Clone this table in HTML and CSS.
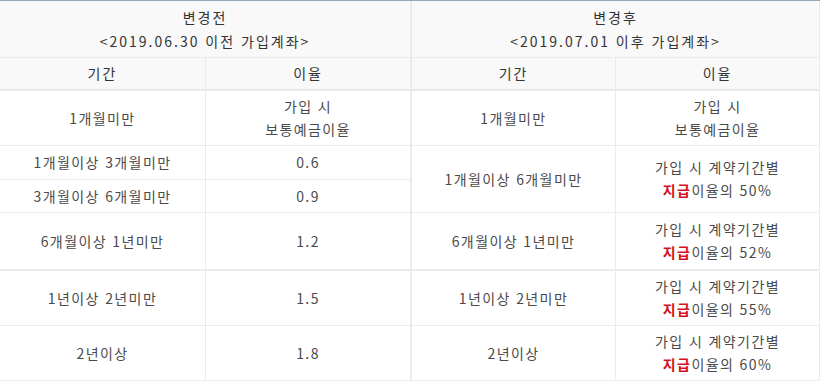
FILE: index.html
```html
<!DOCTYPE html>
<html lang="ko">
<head>
<meta charset="utf-8">
<title>금리 변경</title>
<link rel="stylesheet" href="styles.css">
</head>
<body>
<table class="rates">
  <colgroup>
    <col class="c1"><col class="c2"><col class="c3"><col class="c4">
  </colgroup>
  <thead>
    <tr class="h1">
      <th colspan="2" class="grp">변경전<br>&lt;2019.06.30 이전 가입계좌&gt;</th>
      <th colspan="2">변경후<br>&lt;2019.07.01 이후 가입계좌&gt;</th>
    </tr>
    <tr class="h2">
      <th>기간</th>
      <th class="grp">이율</th>
      <th>기간</th>
      <th>이율</th>
    </tr>
  </thead>
  <tbody>
    <tr class="r-tall">
      <td>1개월미만</td>
      <td class="grp">가입 시<br>보통예금이율</td>
      <td>1개월미만</td>
      <td>가입 시<br>보통예금이율</td>
    </tr>
    <tr class="r-a">
      <td>1개월이상 3개월미만</td>
      <td class="grp">0.6</td>
      <td rowspan="2">1개월이상 6개월미만</td>
      <td rowspan="2">가입 시 계약기간별<br><em>지급</em>이율의 50%</td>
    </tr>
    <tr class="r-b">
      <td>3개월이상 6개월미만</td>
      <td class="grp">0.9</td>
    </tr>
    <tr class="r-tall thick">
      <td>6개월이상 1년미만</td>
      <td class="grp">1.2</td>
      <td>6개월이상 1년미만</td>
      <td>가입 시 계약기간별<br><em>지급</em>이율의 52%</td>
    </tr>
    <tr class="r-tall">
      <td>1년이상 2년미만</td>
      <td class="grp">1.5</td>
      <td>1년이상 2년미만</td>
      <td>가입 시 계약기간별<br><em>지급</em>이율의 55%</td>
    </tr>
    <tr class="r-tall">
      <td>2년이상</td>
      <td class="grp">1.8</td>
      <td>2년이상</td>
      <td>가입 시 계약기간별<br><em>지급</em>이율의 60%</td>
    </tr>
  </tbody>
</table>
</body>
</html>
```

FILE: styles.css
```css
html, body {
  margin: 0;
  padding: 0;
  background: #ffffff;
}

.rates {
  width: 820px;
  border-collapse: separate;
  border-spacing: 0;
  table-layout: fixed;
  border-top: 1px solid #98a4be;
  font-family: "Noto Sans CJK KR", "Noto Sans", sans-serif;
  font-size: 14px;
  letter-spacing: 1.4px;
  color: #4a4a4a;
}

.c1 { width: 206px; }
.c2 { width: 206px; }
.c3 { width: 204px; }
.c4 { width: 204px; }

.rates th,
.rates td {
  box-sizing: border-box;
  padding: 0;
  text-align: center;
  vertical-align: middle;
  border-right: 1px solid #ebebeb;
  border-bottom: 1px solid #ebebeb;
  line-height: 23px;
}

.rates th {
  background: #f9f9f9;
  color: #333333;
  font-weight: normal;
}

.rates .grp {
  border-right: 2px solid #ebebeb;
}

.h1 th {
  height: 57px;
  line-height: 24px;
  letter-spacing: 2px;
}

.h2 th {
  height: 33px;
  border-bottom: 2px solid #e9e9e9;
  letter-spacing: 2px;
}

.r-tall td {
  height: 55px;
}

.r-a td {
  height: 34px;
}

.r-b td {
  height: 33px;
}

.thick td {
  height: 58px;
  border-bottom: 2px solid #ebebeb;
}

.rates em {
  font-style: normal;
  font-weight: bold;
  color: #d3101e;
}
```
